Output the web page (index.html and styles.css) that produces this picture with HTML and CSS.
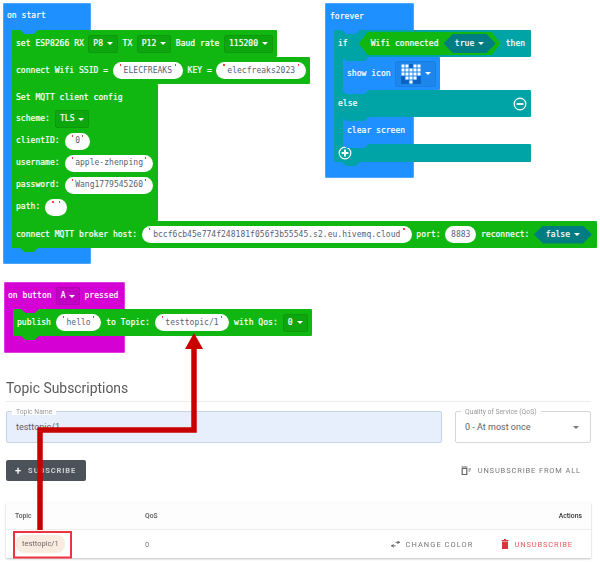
FILE: index.html
```html
<!DOCTYPE html>
<html lang="en">
<head>
<meta charset="utf-8">
<title>MQTT blocks</title>
<link rel="stylesheet" href="styles.css">
</head>
<body>
<div class="page">
  <section class="workspace">
    <div class="hat hat-start">
      <div class="hat-label">on start</div>
      <div class="stack">
        <div class="block green row">set ESP8266 RX <span class="drop">P8 <i></i></span> TX <span class="drop">P12 <i></i></span> Baud rate <span class="drop">115200 <i></i></span></div>
        <div class="block green row wifi">connect Wifi SSID = <span class="str">ELECFREAKS</span> KEY = <span class="str">elecfreaks2023</span></div>
        <div class="block green config">
          <div class="line">Set MQTT client config</div>
          <div class="line">scheme: <span class="drop">TLS <i></i></span></div>
          <div class="line">clientID: <span class="str">0</span></div>
          <div class="line">username: <span class="str">apple-zhenping</span></div>
          <div class="line">password: <span class="str">Wang1779545260</span></div>
          <div class="line">path: <span class="str empty"></span></div>
        </div>
        <div class="block green row broker">connect MQTT broker host: <span class="str long">bccf6cb45e774f248181f056f3b55545.s2.eu.hivemq.cloud</span> port: <span class="str port">8883</span> reconnect: <span class="hex dark">false <i></i></span></div>
      </div>
    </div>

    <div class="hat hat-forever">
      <div class="hat-label">forever</div>
      <div class="stack fork">
        <div class="block teal row if-row">if <span class="hex bool">Wifi connected <span class="hex dark">true <i></i></span></span> then</div>
        <div class="block blue row inner icon-row">show icon
          <span class="led-pick">
            <svg class="led" width="20" height="20" viewBox="0 0 20 20" aria-hidden="true">
              <g fill="#0b63c4">
                <rect x="8" y="0" width="4" height="4"/><rect x="0" y="12" width="4" height="8"/><rect x="16" y="12" width="4" height="8"/><rect x="4" y="16" width="4" height="4"/><rect x="12" y="16" width="4" height="4"/>
              </g>
              <g fill="#fff">
                <rect x="0.5" y="0.5" width="3" height="3"/><rect x="4.5" y="0.5" width="3" height="3"/><rect x="12.5" y="0.5" width="3" height="3"/><rect x="16.5" y="0.5" width="3" height="3"/>
                <rect x="0.5" y="4.5" width="3" height="3"/><rect x="4.5" y="4.5" width="3" height="3"/><rect x="8.5" y="4.5" width="3" height="3"/><rect x="12.5" y="4.5" width="3" height="3"/><rect x="16.5" y="4.5" width="3" height="3"/>
                <rect x="0.5" y="8.5" width="3" height="3"/><rect x="4.5" y="8.5" width="3" height="3"/><rect x="8.5" y="8.5" width="3" height="3"/><rect x="12.5" y="8.5" width="3" height="3"/><rect x="16.5" y="8.5" width="3" height="3"/>
                <rect x="4.5" y="12.5" width="3" height="3"/><rect x="8.5" y="12.5" width="3" height="3"/><rect x="12.5" y="12.5" width="3" height="3"/>
                <rect x="8.5" y="16.5" width="3" height="3"/>
              </g>
            </svg>
            <i></i>
          </span>
        </div>
        <div class="block teal row else-row"><span>else</span>
          <svg width="14" height="14" viewBox="0 0 14 14" aria-hidden="true"><circle cx="7" cy="7" r="5.8" fill="none" stroke="#fff" stroke-width="1.2"/><rect x="3.6" y="6" width="6.8" height="2" fill="#fff"/></svg>
        </div>
        <div class="block blue row inner clear-row">clear screen</div>
        <div class="block teal row end-row">
          <svg width="14" height="14" viewBox="0 0 14 14" aria-hidden="true"><circle cx="7" cy="7" r="5.8" fill="none" stroke="#fff" stroke-width="1.2"/><path d="M3.6 7h6.8M7 3.6v6.8" stroke="#fff" stroke-width="2"/></svg>
        </div>
      </div>
    </div>

    <div class="hat hat-button">
      <div class="hat-label">on button <span class="drop">A <i></i></span> pressed</div>
      <div class="stack">
        <div class="block green row publish">publish <span class="str">hello</span> to Topic: <span class="str">testtopic/1</span> with Qos: <span class="drop">0 <i></i></span></div>
      </div>
    </div>
  </section>

  <section class="panel">
    <h2 class="title">Topic Subscriptions</h2>
    <div class="form">
      <div class="field topic-field">
        <span class="legend">Topic Name</span>
        <span class="value">testtopic/1</span>
      </div>
      <div class="field qos-field">
        <span class="legend">Quality of Service (QoS)</span>
        <span class="value">0 - At most once</span>
        <i class="caret"></i>
      </div>
    </div>
    <div class="actions">
      <button class="btn-sub" type="button"><b>+</b> SUBSCRIBE</button>
      <button class="btn-all" type="button">
        <svg width="11" height="9" viewBox="0 0 11 9" aria-hidden="true"><path d="M0.500 1h6M1.200 2.500h4.600V8.500H1.200zM7.500 3H10M7.500 5H9.200" fill="none" stroke="#666" stroke-width="1.200"/></svg>
        UNSUBSCRIBE FROM ALL
      </button>
    </div>
    <div class="table">
      <div class="thead">
        <span class="c-topic">Topic</span>
        <span class="c-qos">QoS</span>
        <span class="c-act">Actions</span>
      </div>
      <div class="tbody">
        <span class="c-topic"><span class="chip">testtopic/1</span></span>
        <span class="c-qos">0</span>
        <span class="c-act">
          <span class="link change">
            <svg width="9" height="7" viewBox="0 0 10 8" aria-hidden="true"><path d="M0 5.500h5M5 1.500h5M7 0l2.500 1.500L7 3M3 4L0.500 5.500 3 7" fill="none" stroke="#555" stroke-width="1"/></svg>
            CHANGE COLOR
          </span>
          <span class="link danger">
            <svg width="8" height="10" viewBox="0 0 8 10" aria-hidden="true"><path d="M1 2.500h6V10H1zM0.500 1h7v1h-7zM3 0h2v1H3z" fill="#d9363e"/></svg>
            UNSUBSCRIBE
          </span>
        </span>
      </div>
    </div>
  </section>

  <svg class="annot" width="600" height="562" viewBox="0 0 600 562" aria-hidden="true">
    <path d="M194 345V430H40V530" fill="none" stroke="#c80000" stroke-width="5.500"/>
    <polygon points="194,333 185,349 203,349" fill="#c80000"/>
    <rect x="14" y="532" width="57" height="25.500" fill="none" stroke="#ee3340" stroke-width="2"/>
  </svg>
</div>
</body>
</html>
```
FILE: styles.css
```css
* { box-sizing: border-box; }
html, body { margin: 0; padding: 0; background: #fff; }
.page {
  position: relative;
  width: 600px;
  height: 562px;
  overflow: hidden;
  filter: blur(0.45px);
  font-family: Roboto, "Liberation Sans", sans-serif;
}

/* free canvas of blocks */
.workspace { position: relative; height: 372px; }
.hat {
  position: absolute;
  display: flex;
  flex-direction: column;
  align-items: flex-start;
  border-radius: 2px;
  color: #fff;
  font: 400 8px/1 "DejaVu Sans Mono", monospace;
  letter-spacing: 0.03px;
  white-space: nowrap;
  -webkit-text-stroke: 0.2px currentColor;
}
.hat-start { left: 3px; top: 3px; width: 88px; height: 261px; background: #1e90ff; box-shadow: inset 0 0 0 1px #4aa6fb; }
.hat-forever { left: 325px; top: 3px; width: 89px; height: 175px; background: #1e90ff; box-shadow: inset 0 0 0 1px #4aa6fb; }
.hat-button { left: 4px; top: 282px; width: 121px; height: 71px; background: #d400d4; box-shadow: inset 0 0 0 1px #dd3bdd; }
.hat-label { display: flex; align-items: center; gap: 4px; height: 27px; padding-left: 4px; flex: none; }
.hat-start .hat-label { padding-bottom: 1px; }
.hat-forever .hat-label { padding-left: 5px; }
.hat-button .hat-label { padding-left: 4px; padding-top: 1px; }
.hat-label .drop { background: #c100c1; border-color: #b400b4; }
.stack { display: flex; flex-direction: column; align-items: flex-start; margin-left: 9px; }
.fork { background: linear-gradient(#00a4a6, #00a4a6) left top / 9px 100% no-repeat; }

/* statement blocks */
.block { position: relative; border-radius: 1px; flex: none; }
.block::before {
  content: "";
  position: absolute;
  left: 8px;
  top: 0;
  width: 18px;
  height: 4px;
  background: var(--behind);
  clip-path: polygon(0 0, 100% 0, 75% 100%, 25% 100%);
}
.block::after {
  content: "";
  position: absolute;
  left: 8px;
  bottom: -4px;
  z-index: 2;
  width: 18px;
  height: 4px;
  background: var(--fill);
  clip-path: polygon(0 0, 100% 0, 75% 100%, 25% 100%);
}
.green { --fill: #10b710; --behind: #1e90ff; background: var(--fill); }
.teal { --fill: #00a4a6; --behind: #1e90ff; background: var(--fill); }
.blue { --fill: #1e90ff; --behind: #00a4a6; background: var(--fill); }
.hat-button .green { --behind: #d400d4; }
.green + .green { --behind: #10b710; }
.row { display: flex; align-items: center; gap: 4.500px; height: 27px; padding: 0 4px; }
.wifi .str { padding: 0 11px; }
.wifi { width: 298px; }
.publish { gap: 5px; width: 299px; }
.config { width: 146px; height: 137px; padding: 3px 4px 0; }
.line { display: flex; align-items: center; gap: 5px; height: 22px; }
.line:first-child { height: 21px; }
.broker { width: 585px; }

/* fields */
.drop {
  display: inline-flex;
  align-items: center;
  gap: 4px;
  height: 18px;
  padding: 0 4px;
  background: #0ea60e;
  border: 1px solid #0c9a0c;
  border-radius: 2px;
}
.drop i, .hex i, .led-pick i {
  display: inline-block;
  width: 0;
  height: 0;
  border-left: 3px solid transparent;
  border-right: 3px solid transparent;
  border-top: 3.500px solid #fff;
}
.str {
  position: relative;
  display: inline-flex;
  align-items: center;
  justify-content: center;
  height: 17px;
  padding: 0 10.500px;
  background: #fff;
  border-radius: 9px;
  color: #575e75;
  -webkit-text-stroke: 0;
}
.str::before, .str::after {
  content: "";
  position: absolute;
  top: 2px;
  width: 1.500px;
  height: 2px;
  background: #f04040;
}
.str::before { left: 7px; }
.str::after { right: 7px; }
.str.empty { width: 22px; padding: 0; }
.str.long { padding: 0 11.500px; }
.str.port { padding: 0 6px; }
.str.port::before, .str.port::after { display: none; }

.hex {
  display: inline-flex;
  align-items: center;
  justify-content: center;
  gap: 4px;
  height: 18px;
  padding: 0 12px;
  clip-path: polygon(0 50%, 9px 0, calc(100% - 9px) 0, 100% 50%, calc(100% - 9px) 100%, 9px 100%);
}
.hex.dark { background: #007d83; width: 58px; flex: none; }
.hex.bool { background: #10b710; height: 23px; margin: 0 1px 0 7px; padding: 0 0 0 12px; width: 142px; justify-content: flex-start; gap: 5px; flex: none; }
.bool .hex.dark { width: 52px; height: 19px; padding: 0 10px; }

/* forever body */
.if-row { width: 197px; gap: 4px; }
.inner { margin-left: 9px; }
.icon-row { width: 97px; height: 33px; gap: 4px; padding: 0 4px; }
.led-pick {
  display: inline-flex;
  align-items: center;
  gap: 4px;
  height: 26px;
  padding: 0 4px 0 5px;
  background: #1c86ec;
  border: 1px solid #1a7fe0;
  border-radius: 2px;
}
.else-row { width: 197px; justify-content: space-between; }
.clear-row { width: 67px; height: 27px; }
.end-row { width: 197px; height: 18px; }

/* panel */
.panel { padding: 0 9px 0 6px; color: #555; }
.title {
  margin: 0;
  height: 30px;
  padding-top: 7px;
  font-size: 13.900px;
  line-height: 18px;
  font-weight: 400;
  color: #5a5a5a;
  border-bottom: 1px solid #ececec;
}
.form { display: flex; gap: 13px; margin-top: 9px; }
.field {
  position: relative;
  display: flex;
  align-items: center;
  height: 32px;
  padding: 0 9px;
  border: 1px solid #d4d7dc;
  border-radius: 2px;
  font-size: 9px;
  color: #5c5f66;
}
.topic-field { width: 436px; background: #e7effc; border-color: #c6d2e6; }
.qos-field { width: 136px; background: #fff; justify-content: space-between; }
.legend {
  position: absolute;
  left: 5px;
  top: -3px;
  padding: 0 4px;
  background: #fff;
  font-size: 6.800px;
  line-height: 6px;
  color: #9a9a9a;
}
.caret {
  width: 0;
  height: 0;
  margin-right: 2px;
  border-left: 3px solid transparent;
  border-right: 3px solid transparent;
  border-top: 3px solid #777;
}
.actions { display: flex; justify-content: space-between; align-items: center; height: 21px; margin-top: 17px; }
button { font-family: inherit; border: 0; padding: 0; }
.btn-sub {
  display: flex;
  align-items: center;
  gap: 7px;
  width: 80px;
  height: 21px;
  padding-left: 9px;
  background: #4b5259;
  border-radius: 2px;
  color: #ccd0d4;
  font-size: 7.500px;
  font-weight: 700;
  letter-spacing: 0.900px;
}
.btn-sub b { color: #fff; font-size: 11px; font-weight: 500; letter-spacing: 0; }
.btn-all {
  display: flex;
  align-items: center;
  gap: 6px;
  margin-right: 10px;
  background: none;
  color: #777;
  font-size: 7.500px;
  letter-spacing: 0.850px;
}
.table { margin-top: 22px; box-shadow: 0 1px 2px rgba(0, 0, 0, 0.25); }
.thead, .tbody { display: flex; align-items: center; padding: 0 9px; }
.thead { height: 27px; background: #fdfdfd; border-bottom: 1px solid #eee; font-size: 6.800px; font-weight: 500; color: #555; }
.tbody { height: 28px; padding-right: 18px; font-size: 7.500px; color: #777; }
.c-topic { width: 130px; flex: none; }
.c-qos { flex: 1; }
.c-act { display: flex; align-items: center; gap: 27px; }
.thead .c-act { color: #333; }
.chip {
  display: inline-block;
  margin-left: 1px;
  padding: 4px 6px;
  background: #f8ece1;
  border-radius: 8px;
  line-height: 10px;
  color: #766;
}
.link { display: flex; align-items: center; gap: 6px; font-size: 7.500px; letter-spacing: 0.850px; color: #777; }
.link.change { letter-spacing: 1.050px; }
.link.danger { color: #ea5a60; }

/* hand-drawn annotation on top of everything */
.annot { position: absolute; left: 0; top: 0; pointer-events: none; }
```
